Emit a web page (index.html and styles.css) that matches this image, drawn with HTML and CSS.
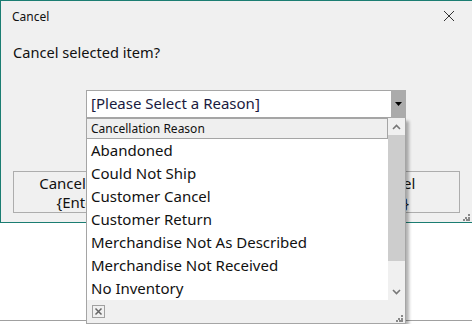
FILE: index.html
```html
<!DOCTYPE html>
<html lang="en">
<head>
<meta charset="UTF-8">
<meta name="viewport" content="width=device-width, initial-scale=1.0">
<title>Cancel</title>
<link rel="stylesheet" href="styles.css">
</head>
<body>
<div class="dialog">
  <div class="titlebar">
    <span class="title">Cancel</span>
    <svg class="close" width="12" height="12" viewBox="0 0 12 12">
      <path d="M1 1 L11 11 M11 1 L1 11" stroke="#333" stroke-width="1" fill="none"/>
    </svg>
  </div>
  <div class="prompt">Cancel selected item?</div>
  <div class="combo">
    <span class="combo-text">[Please Select a Reason]</span>
    <span class="combo-btn">
      <svg width="7" height="4" viewBox="0 0 7 4"><path d="M0 0 H7 L3.5 4 Z" fill="#000"/></svg>
    </span>
  </div>
  <div class="buttons">
    <div class="btn">Cancel Item<br>{Enter}</div>
    <div class="btn">Cancel<br>{Esc}</div>
  </div>
  <span class="grip"></span>
</div>
<div class="page-rest"></div>

<!-- open dropdown list of the combo -->
<div class="dropdown">
  <div class="dropdown-body">
    <div class="list">
      <div class="list-head">Cancellation Reason</div>
      <div class="item">Abandoned</div>
      <div class="item">Could Not Ship</div>
      <div class="item">Customer Cancel</div>
      <div class="item">Customer Return</div>
      <div class="item">Merchandise Not As Described</div>
      <div class="item">Merchandise Not Received</div>
      <div class="item">No Inventory</div>
    </div>
    <div class="scrollbar">
      <div class="arrow">
        <svg width="9" height="6" viewBox="0 0 9 6"><path d="M1 5 L4.5 1.5 L8 5" stroke="#777" stroke-width="1.6" fill="none"/></svg>
      </div>
      <div class="thumb"></div>
      <div class="track"></div>
      <div class="arrow">
        <svg width="9" height="6" viewBox="0 0 9 6"><path d="M1 1 L4.5 4.5 L8 1" stroke="#777" stroke-width="1.6" fill="none"/></svg>
      </div>
    </div>
  </div>
  <div class="dropdown-foot">
    <span class="clear-box">
      <svg width="9" height="9" viewBox="0 0 9 9"><path d="M1.5 1.5 L7.5 7.5 M7.5 1.5 L1.5 7.5" stroke="#666" stroke-width="1.5" fill="none"/></svg>
    </span>
    <span class="grip"></span>
  </div>
</div>
</body>
</html>
```

FILE: styles.css
```css
body {
    margin: 0;
    width: 472px;
    height: 324px;
    overflow: hidden;
    background-color: #fff;
    font-family: "Noto Sans", "Open Sans", Arial, sans-serif;
    color: #111;
    position: relative;
}

.dialog {
    position: relative;
    height: 221px;
    background-color: #f0f0f0;
    border-top: 1px solid #1b7d72;
    border-left: 1px solid #1b7d72;
    border-bottom: 1px solid #1b7d72;
}

.titlebar {
    height: 30px;
    display: flex;
    align-items: center;
    justify-content: space-between;
    padding: 0 17px 0 11px;
}

.title {
    font-size: 12px;
}

.prompt {
    font-size: 14.6px;
    padding-left: 12px;
    margin-top: 11px;
    line-height: 20px;
}

.combo {
    display: flex;
    margin: 28px 0 0 85px;
    width: 320px;
    height: 28px;
    box-sizing: border-box;
    border: 1px solid #a5a5a5;
    background-color: #fff;
}

.combo-text {
    flex: 1;
    font-size: 15px;
    line-height: 25px;
    padding-left: 4px;
    color: #1a1a40;
}

.combo-btn {
    width: 15px;
    margin: -1px -1px -1px 0;
    background-color: #ababab;
    display: flex;
    align-items: center;
    justify-content: center;
}

.buttons {
    display: flex;
    justify-content: space-between;
    padding: 0 12px;
    margin-top: 53px;
}

.btn {
    width: 136px;
    height: 42px;
    box-sizing: border-box;
    border: 1px solid #adadad;
    font-size: 15px;
    line-height: 19px;
    text-align: center;
    padding-top: 2px;
}

.grip {
    position: absolute;
    right: 2px;
    bottom: 1px;
    width: 7px;
    height: 7px;
    background:
        linear-gradient(#888, #888) 5px 0 / 2px 2px no-repeat,
        linear-gradient(#888, #888) 2px 3px / 2px 2px no-repeat,
        linear-gradient(#888, #888) 5px 3px / 2px 2px no-repeat,
        linear-gradient(#888, #888) 0 5px / 2px 2px no-repeat,
        linear-gradient(#888, #888) 3px 5px / 2px 2px no-repeat,
        linear-gradient(#888, #888) 5px 5px / 2px 2px no-repeat;
}

.page-rest {
    height: 97px;
    border-bottom: 1px solid #a0a0a0;
}

.dropdown {
    position: absolute;
    left: 86px;
    top: 118px;
    width: 320px;
    box-sizing: border-box;
    border: 1px solid #a5a5a5;
    border-top: none;
    background-color: #fff;
    box-shadow: 3px 3px 3px rgba(0, 0, 0, 0.3);
}

.dropdown-body {
    display: flex;
}

.list {
    flex: 1;
}

.list-head {
    height: 19px;
    line-height: 19px;
    font-size: 12px;
    padding-left: 4px;
    background-color: #efefef;
    border-bottom: 1px solid #a5a5a5;
    border-right: 1px solid #a5a5a5;
    border-top: 1px solid #a5a5a5;
}

.item {
    height: 23px;
    line-height: 23px;
    font-size: 15px;
    padding-left: 4px;
    white-space: nowrap;
}

.scrollbar {
    width: 17px;
    display: flex;
    flex-direction: column;
    background-color: #f0f0f0;
}

.arrow {
    height: 17px;
    display: flex;
    align-items: center;
    justify-content: center;
}

.thumb {
    height: 126px;
    background-color: #cdcdcd;
}

.track {
    flex: 1;
}

.dropdown-foot {
    position: relative;
    height: 23px;
    background-color: #f0f0f0;
}

.clear-box {
    position: absolute;
    left: 5px;
    top: 5px;
    width: 11px;
    height: 11px;
    border: 1px solid #a0a0a0;
    display: flex;
    align-items: center;
    justify-content: center;
}
```
